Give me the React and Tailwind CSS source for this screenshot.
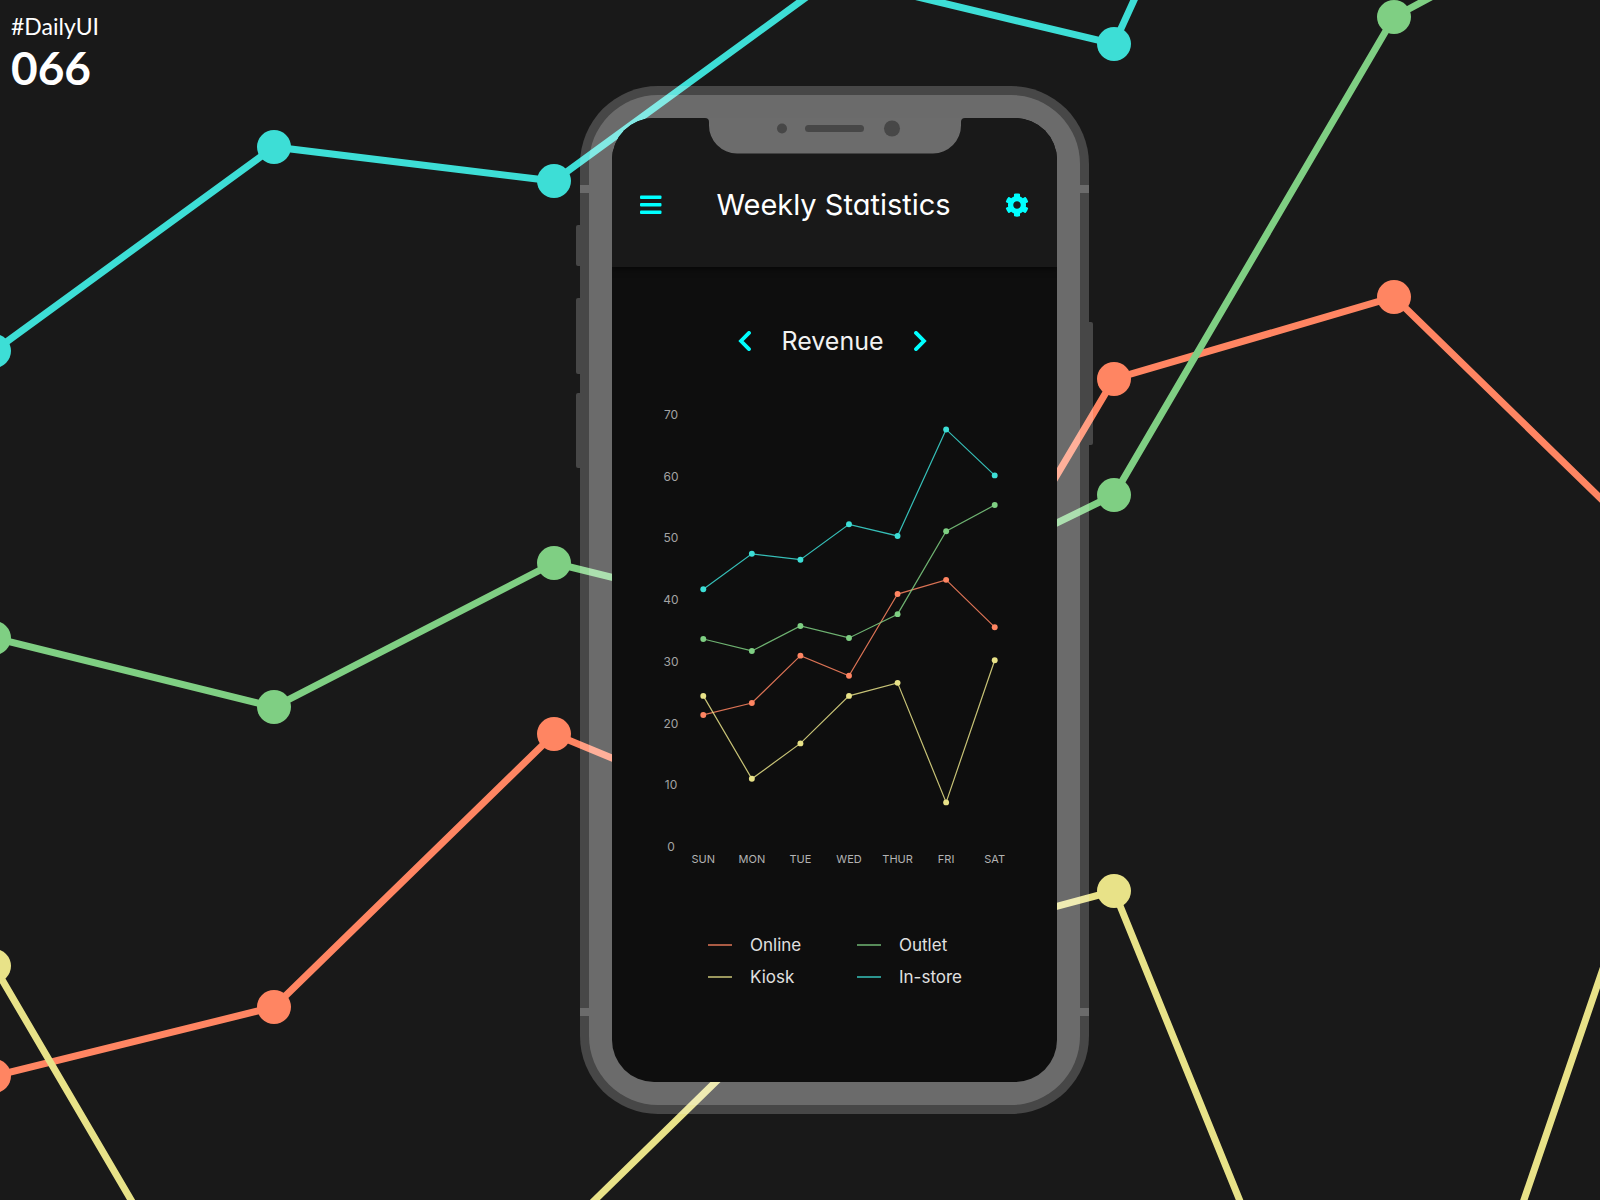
import React from "react";
import { FaCog } from "react-icons/fa";

const DAYS = ["SUN", "MON", "TUE", "WED", "THUR", "FRI", "SAT"];
const TICKS = [70, 60, 50, 40, 30, 20, 10, 0];

// Plot units: one day is 280 wide, y grows downwards.
const SERIES = [
  { name: "Online", color: "#ff8562", ys: [1076, 1007, 734, 850, 379, 297, 570] },
  { name: "Outlet", color: "#7fcf83", ys: [638, 707, 563, 632, 495, 17, -134] },
  { name: "Kiosk", color: "#e8e288", ys: [966, 1444, 1240, 966, 891, 1580, 761] },
  { name: "In-store", color: "#3dded6", ys: [351, 147, 181, -23, 44, -570, -305] },
];

const dayX = (i) => i * 280 - 6;

function SeriesLines({ lineOpacity = 1 }) {
  return SERIES.map(({ name, color, ys }) => (
    <g key={name} fill={color}>
      <polyline
        points={ys.map((y, i) => `${dayX(i)},${y}`).join(" ")}
        fill="none"
        stroke={color}
        strokeWidth="7"
        strokeOpacity={lineOpacity}
      />
      {ys.map((y, i) => (
        <circle key={i} cx={dayX(i)} cy={y} r="17" />
      ))}
    </g>
  ));
}

function Backdrop() {
  return (
    <svg
      className="absolute inset-0 h-full w-full"
      viewBox="0 0 1600 1200"
      preserveAspectRatio="xMidYMid slice"
      aria-hidden="true"
    >
      <SeriesLines />
    </svg>
  );
}

function Notch() {
  return (
    <svg
      className="absolute top-0 left-1/2 h-9 w-[260px] -translate-x-1/2"
      viewBox="0 0 260 36"
      aria-hidden="true"
    >
      <path
        d="M0 0 Q4 0 4 4 V7 A28 28 0 0 0 32 35.500 H228 A28 28 0 0 0 256 7 V4 Q256 0 260 0 Z"
        fill="#6c6c6c"
      />
      <circle cx="77" cy="10.500" r="5" fill="#474747" />
      <rect x="100" y="7" width="59" height="7" rx="3.500" fill="#474747" />
      <circle cx="187" cy="10.500" r="8" fill="#474747" />
    </svg>
  );
}

function Chevron({ d }) {
  return (
    <svg className="h-5 w-[14px]" viewBox="0 0 14 20" fill="none" aria-hidden="true">
      <path d={d} stroke="#00ffff" strokeWidth="3.800" strokeLinecap="round" strokeLinejoin="miter" />
    </svg>
  );
}

function Header() {
  return (
    <header className="relative z-10 flex h-[149px] items-start justify-between bg-[#191919] px-7 pt-[69px] shadow-[0_2px_6px_rgba(0,0,0,0.6)]">
      <button type="button" aria-label="Menu" className="flex h-9 items-center">
        <svg className="h-5 w-[22px]" viewBox="0 0 22 20" fill="#00ffff" aria-hidden="true">
          <rect y="0.500" width="21.500" height="3.400" rx="1" />
          <rect y="8" width="21.500" height="3.400" rx="1" />
          <rect y="15.500" width="21.500" height="3.400" rx="1" />
        </svg>
      </button>
      <h1 className="text-[29px] leading-9 text-white">Weekly Statistics</h1>
      <button type="button" aria-label="Settings" className="flex h-9 items-center text-[#00ffff]">
        <FaCog className="h-6 w-6" />
      </button>
    </header>
  );
}

function MetricPicker() {
  return (
    <div className="flex items-center justify-center gap-[29px] pr-1">
      <button type="button" aria-label="Previous metric">
        <Chevron d="M11 1.900 L3 10 L11 18.100" />
      </button>
      <h2 className="text-[25px] leading-9 text-[#f2f2f2]">Revenue</h2>
      <button type="button" aria-label="Next metric">
        <Chevron d="M3 1.900 L11 10 L3 18.100" />
      </button>
    </div>
  );
}

function Chart() {
  return (
    <div className="mt-12 grid grid-cols-[16px_1fr] items-start pr-[38px] pl-[51px] leading-4">
      <div className="flex h-[448px] flex-col justify-between text-center text-xs leading-4 text-[#a3a3a3]">
        {TICKS.map((t) => (
          <span key={t}>{t}</span>
        ))}
      </div>
      <div className="pt-2">
        <svg
          className="h-[432px] w-full"
          viewBox="-146 -652 1960 2488"
          role="img"
          aria-label="Revenue by day and channel"
        >
          <SeriesLines lineOpacity={0.85} />
        </svg>
        <div className="mt-1 grid grid-cols-7 text-center text-[11px] text-[#b3b3b3]">
          {DAYS.map((d) => (
            <span key={d}>{d}</span>
          ))}
        </div>
      </div>
    </div>
  );
}

function Legend() {
  return (
    <ul className="mt-[62px] grid grid-cols-[149px_104px] justify-center text-[17px] leading-8 text-[#e0e0e0]">
      {SERIES.map(({ name, color }) => (
        <li key={name} className="flex items-center gap-[18px]">
          <span className="h-[2px] w-6 shrink-0 opacity-65" style={{ backgroundColor: color }} />
          <span className="whitespace-nowrap">{name}</span>
        </li>
      ))}
    </ul>
  );
}

function Phone() {
  return (
    <div className="relative w-full max-w-[509px] rounded-[78px] bg-white/20 p-[9px]">
      <span className="absolute top-[139px] -left-1 h-[41px] w-1 rounded-l-xs bg-white/20" />
      <span className="absolute top-[212px] -left-1 h-[76px] w-1 rounded-l-xs bg-white/20" />
      <span className="absolute top-[307px] -left-1 h-[75px] w-1 rounded-l-xs bg-white/20" />
      <span className="absolute top-[236px] -right-1 h-[123px] w-1 rounded-r-xs bg-white/20" />
      <span className="absolute top-[99px] left-0 h-2 w-[9px] bg-white/20" />
      <span className="absolute top-[99px] right-0 h-2 w-[9px] bg-white/20" />
      <span className="absolute bottom-[98px] left-0 h-2 w-[9px] bg-white/20" />
      <span className="absolute right-0 bottom-[98px] h-2 w-[9px] bg-white/20" />
      <div className="rounded-[69px] bg-white/20 p-[23px]">
        <div className="relative min-h-[964px] overflow-hidden rounded-[42px] bg-[#0e0e0e] font-['Inter',sans-serif] [font-feature-settings:'cv11']">
          <Header />
          <div className="absolute inset-x-0 top-0 z-20">
            <Notch />
          </div>
          <main className="pt-14">
            <MetricPicker />
            <Chart />
            <Legend />
          </main>
        </div>
      </div>
    </div>
  );
}

export default function App() {
  return (
    <div className="relative flex min-h-screen items-center justify-center overflow-hidden bg-[#191919] py-[86px] pl-[69px]">
      <Backdrop />
      <div className="absolute top-3 left-[11px] font-['Lato',sans-serif] text-white">
        <p className="text-[23px] leading-7">#DailyUI</p>
        <p className="text-[46px] leading-14 font-bold">066</p>
      </div>
      <Phone />
    </div>
  );
}
